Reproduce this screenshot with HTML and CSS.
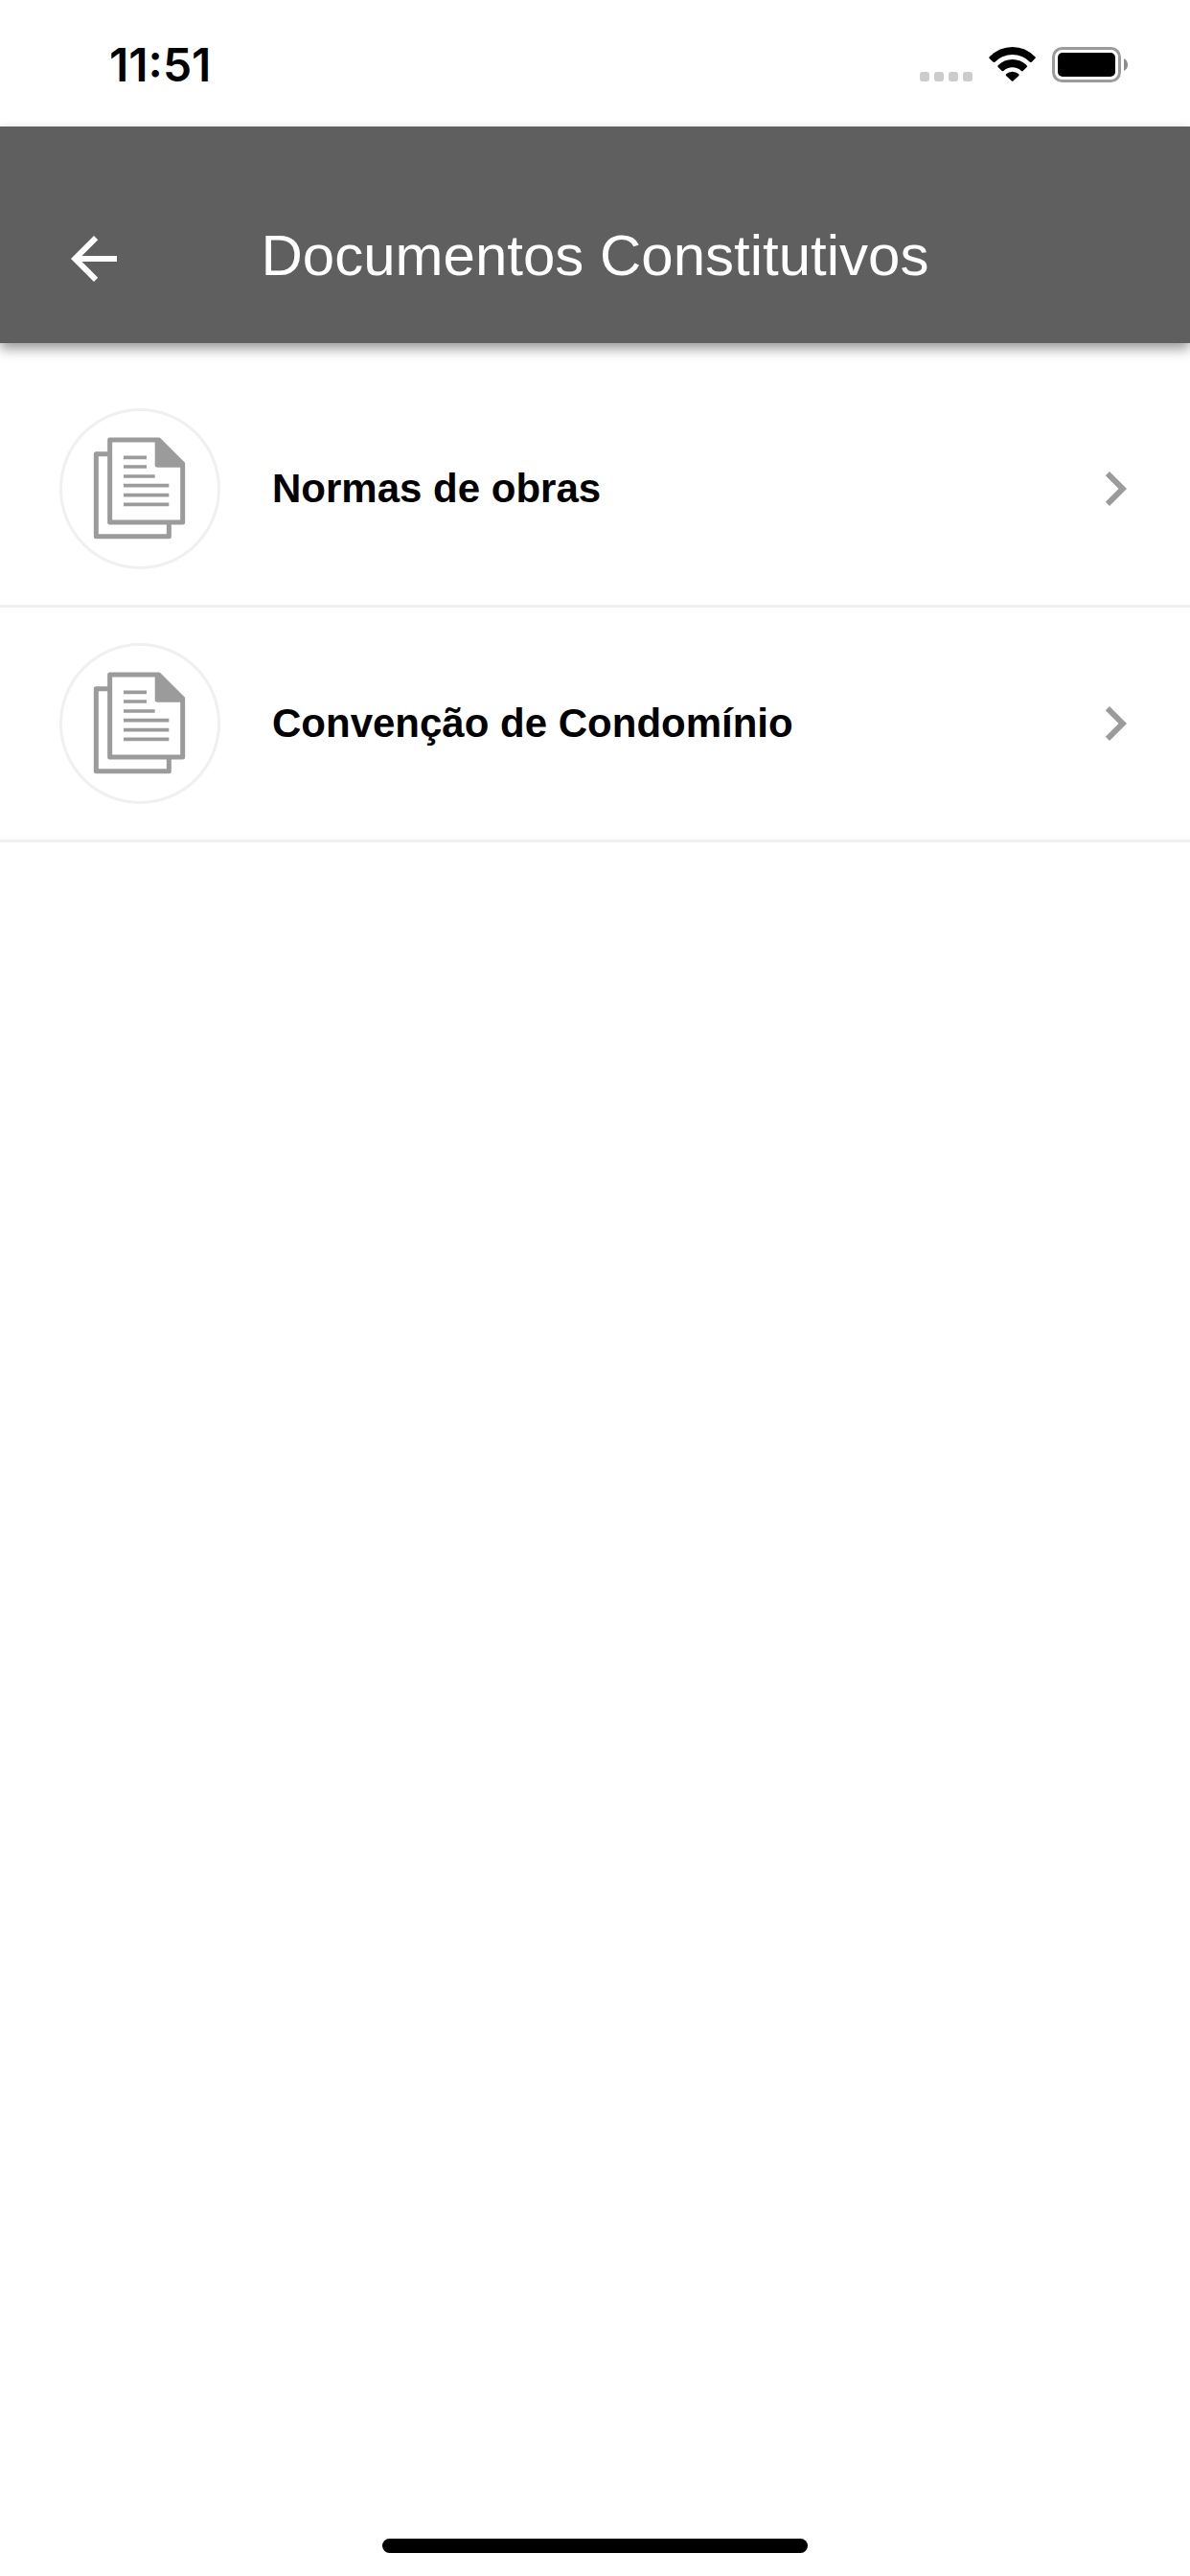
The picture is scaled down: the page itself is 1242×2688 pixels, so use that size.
FILE: index.html
```html
<!DOCTYPE html>
<html lang="pt-BR">
<head>
    <meta charset="UTF-8">
    <meta name="viewport" content="width=device-width, initial-scale=1.0">
    <title>Documentos Constitutivos</title>
    <link rel="stylesheet" href="styles.css">
</head>
<body>
    <div class="status-bar">
        <span class="time">11:51</span>
        <div class="status-icons">
            <svg class="signal" viewBox="0 0 55 37" aria-hidden="true">
                <rect x="0" y="26" width="10" height="10" rx="3"/>
                <rect x="15" y="26" width="10" height="10" rx="3"/>
                <rect x="30" y="26" width="10" height="10" rx="3"/>
                <rect x="45" y="26" width="10" height="10" rx="3"/>
            </svg>
            <svg class="wifi" viewBox="0 0 147 111" aria-hidden="true">
                <path d="M2 31Q0 34 2 36L14 47Q16 49 19 47Q42 24 74 24T129 47Q131 49 134 47L145 36Q148 34 145 31Q115 0 74 0T2 31z"/>
                <path d="M29 58Q26 61 29 63L41 75Q43 77 46 75Q58 64 74 64T102 75Q105 77 107 75L119 63Q122 61 119 58Q100 39 74 39T29 58z"/>
                <path d="M54 85Q52 88 54 90L71 106Q74 109 77 106L94 90Q96 88 94 85Q85 77 74 77T54 85z"/>
            </svg>
            <svg class="battery" viewBox="0 0 80 37" aria-hidden="true">
                <rect x="1.5" y="1.5" width="69" height="34" rx="9" fill="none" stroke="#9b9b9b" stroke-width="3"/>
                <rect x="6" y="6" width="60" height="25" rx="5"/>
                <path d="M75 12q4 2 4 6.500t-4 6.500z" fill="#8c8c8c"/>
            </svg>
        </div>
    </div>

    <header class="header">
        <button class="back" type="button" aria-label="Voltar">
            <svg class="icon" viewBox="0 0 24 24" aria-hidden="true">
                <path d="M20 11H7.830l5.590-5.590L12 4l-8 8 8 8 1.410-1.410L7.830 13H20v-2z"/>
            </svg>
        </button>
        <h1>Documentos Constitutivos</h1>
    </header>

    <!-- símbolo usado em todos os itens da lista -->
    <svg class="symbols" aria-hidden="true">
        <symbol id="documents" viewBox="138 138 300 324">
            <g fill="none" stroke="#9b9b9b" stroke-width="15" stroke-linejoin="round">
                <path d="M194 191H151V449H379V405"/>
                <path d="M194 147H347L422 222V405H194z"/>
            </g>
            <path fill="#9b9b9b" d="M335 147H350L429 220V233H343Q335 233 335 225z"/>
            <path stroke="#9b9b9b" stroke-width="11" d="M237 202H309M237 231H309M237 261H335M237 290H379M237 320H379M237 349H379"/>
        </symbol>
        <symbol id="chevron" viewBox="0 0 24 24">
            <path d="M10 6L8.590 7.410 13.170 12l-4.580 4.590L10 18l6-6z"/>
        </symbol>
    </svg>

    <main>
        <ul class="list">
            <li>
                <a class="item" href="#normas">
                    <span class="avatar"><svg class="documents"><use href="#documents"/></svg></span>
                    <span class="name">Normas de obras</span>
                    <svg class="icon chevron"><use href="#chevron"/></svg>
                </a>
            </li>
            <li>
                <a class="item" href="#convencao">
                    <span class="avatar"><svg class="documents"><use href="#documents"/></svg></span>
                    <span class="name">Convenção de Condomínio</span>
                    <svg class="icon chevron"><use href="#chevron"/></svg>
                </a>
            </li>
        </ul>
    </main>

    <div class="home-indicator"></div>
</body>
</html>
```

FILE: styles.css
```css
* {
    box-sizing: border-box;
}

body {
    margin: 0;
    min-height: 100vh;
    display: flex;
    flex-direction: column;
    font-family: 'Liberation Sans', Arial, sans-serif;
    background-color: white;
    color: black;
}

svg {
    display: block;
    flex-shrink: 0;
}

.status-bar {
    display: flex;
    justify-content: space-between;
    align-items: flex-start;
    height: 132px;
    padding: 40px 64px 0 114px;
}

.time {
    font-family: Inter, sans-serif;
    font-size: 48px;
    font-weight: 600;
    line-height: 56px;
}

.status-icons {
    display: flex;
    gap: 17px;
    padding-top: 9px;
}

.signal {
    width: 55px;
    height: 37px;
    fill: #cccccc;
}

.wifi {
    width: 49px;
    height: 37px;
}

.battery {
    width: 80px;
    height: 37px;
}

.header {
    display: grid;
    grid-template-columns: 1fr auto 1fr;
    align-items: start;
    padding: 102px 62px 52px;
    background-color: #5f5f5f;
    color: white;
    box-shadow: 0 6px 12px rgba(0, 0, 0, 0.4);
}

.header h1 {
    margin: 0;
    font-size: 60px;
    font-weight: normal;
    line-height: 66px;
}

.back {
    width: 72px;
    padding: 0;
    border: none;
    background: none;
    color: inherit;
    cursor: pointer;
}

.icon {
    width: 72px;
    height: 72px;
    fill: currentColor;
}

.symbols {
    position: absolute;
    width: 0;
    height: 0;
}

main {
    flex: 1;
    padding-top: 31px;
}

.list {
    margin: 0;
    padding: 0;
    list-style: none;
}

.item {
    display: flex;
    align-items: center;
    gap: 54px;
    padding: 37px 42px 37px 62px;
    border-bottom: 3px solid #f0f0f0;
    color: inherit;
    text-decoration: none;
}

.avatar {
    display: flex;
    align-items: center;
    justify-content: center;
    width: 168px;
    height: 168px;
    border: 3px solid #f0f0f0;
    border-radius: 50%;
}

.documents {
    width: 100px;
    height: 108px;
}

.name {
    flex: 1;
    font-size: 42px;
    font-weight: bold;
}

.chevron {
    color: #9b9b9b;
}

.home-indicator {
    align-self: center;
    width: 444px;
    height: 15px;
    margin-bottom: 24px;
    border-radius: 8px;
    background-color: black;
}
```
